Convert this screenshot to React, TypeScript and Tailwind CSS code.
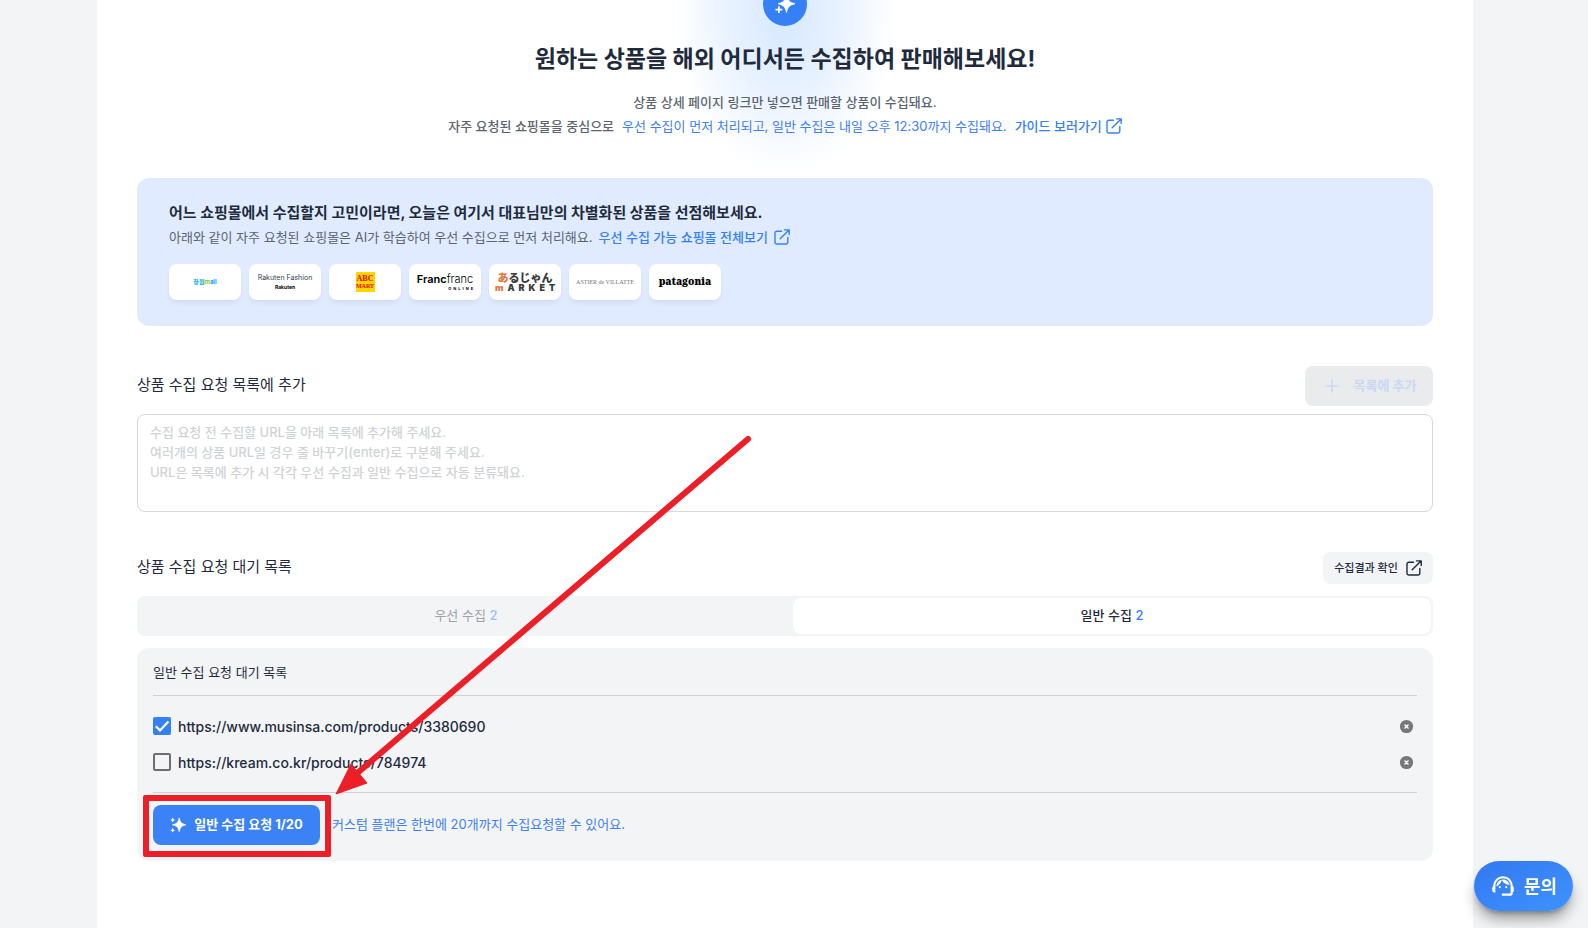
import React from "react";
import { Plus } from "lucide-react";

function OpenIcon({ className }: { className: string }) {
  return (
    <svg viewBox="0 0 16 16" fill="none" stroke="currentColor" strokeWidth="1.4" strokeLinecap="round" strokeLinejoin="round" className={className} aria-hidden="true">
      <path d="M7.5 2.2H2.8A1.8 1.8 0 0 0 1 4v9.2A1.8 1.8 0 0 0 2.8 15H12a1.8 1.8 0 0 0 1.8-1.8V8.5" />
      <path d="M10.5.9H15.2V5.6M15 1.1 6.2 9.8" />
    </svg>
  );
}

function SparkleIcon({ className, mirrored }: { className: string; mirrored?: boolean }) {
  return (
    <svg viewBox="0 0 16 16" fill="currentColor" className={className} aria-hidden="true">
      <path d="M9.200.800C10.300 5.400 11.300 6.500 16 7.800 11.300 9.100 10.300 10.200 9.200 14.800 8.100 10.200 7.100 9.100 2.400 7.800 7.100 6.500 8.100 5.400 9.200.800Z" stroke="currentColor" strokeWidth="0.600" strokeLinejoin="round" />
      {mirrored ? (
        <path d="M2.400 9.800h1.400v2h2v1.400h-2v2H2.400v-2h-2v-1.400h2Z" />
      ) : (
        <>
          <path d="M2.700.6 3.500 2.200 5.100 3 3.500 3.800 2.700 5.400 1.900 3.800.3 3 1.900 2.200Z" />
          <path d="M2.700 10.800 3.500 12.400 5.100 13.200 3.500 14 2.700 15.600 1.900 14 .3 13.200 1.900 12.400Z" />
        </>
      )}
    </svg>
  );
}

function SupportIcon() {
  return (
    <svg viewBox="0 0 24 24" fill="currentColor" className="size-[26px]" aria-hidden="true">
      <path d="M21 12.220C21 6.730 16.740 3 12 3c-4.690 0-9 3.650-9 9.280-.6.340-1 .980-1 1.720v2c0 1.100.9 2 2 2h1v-6.100c0-3.870 3.130-7 7-7s7 3.130 7 7V19h-8v2h8c1.100 0 2-.9 2-2v-1.220c.590-.310 1-.920 1-1.640v-2.300c0-.700-.410-1.310-1-1.620z" />
      <circle cx="9" cy="13" r="1" />
      <circle cx="15" cy="13" r="1" />
      <path d="M18 11.030C17.520 8.180 15.040 6 12.050 6c-3.030 0-6.290 2.510-6.030 6.450 2.470-1.010 4.330-3.210 4.860-5.890 1.310 2.630 4 4.440 7.120 4.470z" />
    </svg>
  );
}

const shops = [
  {
    name: "창원mall",
    logo: (
      <span className="text-[6px] leading-none font-bold text-sky-500">
        창원<span className="text-lime-500">m</span>all
      </span>
    ),
  },
  {
    name: "Rakuten Fashion",
    logo: (
      <span className="flex flex-col items-center gap-1 leading-none text-gray-700">
        <span className="text-[7px] leading-none whitespace-nowrap">Rakuten Fashion</span>
        <span className="text-[5px] leading-none font-bold text-black">Rakuten</span>
      </span>
    ),
  },
  {
    name: "ABC Mart",
    logo: (
      <span className="flex h-5 w-[19px] flex-col items-center justify-center bg-[#ffd500] font-['Liberation_Serif',serif] text-[8px] leading-[9px] font-bold text-red-600">
        <span>ABC</span>
        <span className="text-[6px] leading-[7px]">MART</span>
      </span>
    ),
  },
  {
    name: "Francfranc",
    logo: (
      <span className="flex flex-col items-end gap-0.5 leading-none text-black">
        <span className="text-[11px] leading-none"><span className="font-semibold">Franc</span><span className="font-light">franc</span></span>
        <span className="flex gap-0.5 text-[4px] leading-none font-bold">
          <span>O</span><span>N</span><span>L</span><span>I</span><span>N</span><span>E</span>
        </span>
      </span>
    ),
  },
  {
    name: "あるじゃん MARKET",
    logo: (
      <span className="flex flex-col items-center font-['Noto_Sans_CJK_JP',sans-serif] font-black text-[#3a3a3a]">
        <span className="text-[11px] leading-[12px] whitespace-nowrap"><span className="text-[#e8743b]">あ</span>るじゃん</span>
        <span className="flex gap-1 font-['Inter',sans-serif] text-[9px] leading-[10px]">
          <span className="text-[#e8743b]">m</span><span>A</span><span>R</span><span>K</span><span>E</span><span>T</span>
        </span>
      </span>
    ),
  },
  {
    name: "Astier de Villatte",
    logo: <span className="font-['Liberation_Serif',serif] text-[6px] leading-none whitespace-nowrap text-neutral-500">ASTIER de VILLATTE</span>,
  },
  {
    name: "Patagonia",
    logo: <span className="pb-0.5 font-['Noto_Serif','DejaVu_Serif',serif] text-[10px] leading-none font-black text-black">patagonia</span>,
  },
];

const requests = [
  { url: "https://www.musinsa.com/products/3380690", checked: true },
  { url: "https://kream.co.kr/products/784974", checked: false },
];

function RequestRow({ url, checked }: { url: string; checked: boolean }) {
  return (
    <li className="flex h-9 items-center justify-between pr-[3px]">
      <label className="flex items-center gap-[7px] text-[14px] font-medium">
        <span className="grid size-[18px]">
          <input
            type="checkbox"
            defaultChecked={checked}
            className="peer col-start-1 row-start-1 size-[18px] appearance-none rounded-xs border-2 border-[#6d7073] checked:border-[#3580f2] checked:bg-[#3580f2]"
          />
          <svg viewBox="0 0 18 18" fill="none" stroke="white" strokeWidth="2.200" className="pointer-events-none invisible col-start-1 row-start-1 size-[18px] peer-checked:visible" aria-hidden="true">
            <path d="m2.800 9.200 4.200 4.200 8.400-8.800" />
          </svg>
        </span>
        {url}
      </label>
      <button type="button" aria-label={`${url} 삭제`}>
        <svg viewBox="0 0 15 15" className="size-[15px]" aria-hidden="true">
          <circle cx="7.500" cy="7.500" r="6.600" fill="#757877" />
          <path d="m5.500 5.500 4 4m0-4-4 4" stroke="white" strokeWidth="1.400" />
        </svg>
      </button>
    </li>
  );
}

function Pointer() {
  return (
    <>
      <div className="pointer-events-none absolute -top-2.5 -left-2.5 h-[62px] w-[188px] rounded-xs border-6 border-[#ec1f29]" />
      <svg viewBox="0 0 420 362" className="pointer-events-none absolute bottom-[50px] left-[180px] h-[362px] w-[420px] max-w-none" aria-hidden="true">
        <path d="M415 6 22 342" stroke="#ec1f29" strokeWidth="6" strokeLinecap="round" />
        <path d="M3 361 18 331 34 350Z" fill="#ec1f29" stroke="#ec1f29" />
      </svg>
    </>
  );
}

export default function App() {
  return (
    <div className="min-h-screen overflow-hidden bg-[#f2f4f6] pr-[115px] pl-[97px] font-['Inter','Noto_Sans_CJK_KR',sans-serif] text-[#1f2b3d]">
      <main className="min-h-screen bg-white px-10 pb-16">
        <header className="relative flex flex-col items-center">
          <div className="absolute top-0 left-1/2 h-44 w-56 -translate-x-1/2 bg-[radial-gradient(ellipse_at_50%_8%,#d6e8ff_0%,#e8f2ff_35%,#f8fbff_58%,#ffffff_70%)]" />
          <div className="relative -mt-[18px] flex size-11 items-center justify-center rounded-full bg-[#3580f6] text-white">
            <SparkleIcon className="size-5" mirrored />
          </div>
          <h1 className="relative mt-[17px] text-[23px] leading-8 font-bold">원하는 상품을 해외 어디서든 수집하여 판매해보세요!</h1>
          <p className="relative mt-[15px] text-[13px] leading-6 font-medium text-[#5b6470]">상품 상세 페이지 링크만 넣으면 판매할 상품이 수집돼요.</p>
          <p className="relative flex items-center gap-2 text-[13px] leading-6 font-medium text-[#5b6470]">
            자주 요청된 쇼핑몰을 중심으로
            <span className="font-normal text-[#4080f0]">우선 수집이 먼저 처리되고, 일반 수집은 내일 오후 12:30까지 수집돼요.</span>
            <a href="#guide" className="flex items-center gap-1 text-[#3580f6]">
              가이드 보러가기 <OpenIcon className="size-4" />
            </a>
          </p>
        </header>

        <section className="mt-10 rounded-xl bg-[#e0ebff] px-8 pt-[22px] pb-[26px]">
          <h2 className="text-[15px] leading-[26px] font-bold">어느 쇼핑몰에서 수집할지 고민이라면, 오늘은 여기서 대표님만의 차별화된 상품을 선점해보세요.</h2>
          <p className="flex items-center gap-1.5 text-[13px] leading-[22px] text-[#5b6470]">
            아래와 같이 자주 요청된 쇼핑몰은 AI가 학습하여 우선 수집으로 먼저 처리해요.
            <a href="#malls" className="flex items-center gap-1.5 font-medium text-[#3580f6]">
              우선 수집 가능 쇼핑몰 전체보기 <OpenIcon className="size-4" />
            </a>
          </p>
          <ul className="mt-4 flex gap-2">
            {shops.map((shop) => (
              <li key={shop.name} className="flex h-9 w-[72px] items-center justify-center overflow-hidden rounded-lg bg-white shadow-md shadow-black/5">
                {shop.logo}
              </li>
            ))}
          </ul>
        </section>

        <section className="mt-10">
          <div className="flex h-10 items-center justify-between">
            <label htmlFor="urls" className="pb-0.5 text-[15px]">상품 수집 요청 목록에 추가</label>
            <button type="button" disabled className="flex h-10 w-32 items-center justify-center gap-3 rounded-lg bg-[#e9ebec] text-[13px] font-bold text-[#c9d8f6]">
              <Plus className="size-5" strokeWidth={2} /> 목록에 추가
            </button>
          </div>
          <textarea
            id="urls"
            className="mt-2 block h-[98px] w-full resize-none rounded-lg border border-[#d5d8db] bg-white px-3 py-[7px] text-[13px] leading-5 placeholder:font-medium placeholder:text-[#d0d3d5]"
            placeholder={"수집 요청 전 수집할 URL을 아래 목록에 추가해 주세요.\n여러개의 상품 URL일 경우 줄 바꾸기(enter)로 구분해 주세요.\nURL은 목록에 추가 시 각각 우선 수집과 일반 수집으로 자동 분류돼요."}
          />
        </section>

        <section className="mt-10">
          <div className="flex h-8 items-center justify-between">
            <h2 className="pb-0.5 text-[15px]">상품 수집 요청 대기 목록</h2>
            <button type="button" className="flex h-8 w-[110px] items-center justify-center gap-2 rounded-lg bg-[#f2f4f6] text-[11px] font-medium">
              수집결과 확인 <OpenIcon className="size-4" />
            </button>
          </div>
          <div role="tablist" className="mt-3 flex h-10 rounded-lg bg-[#f2f4f6] p-0.5 text-[13px]">
            <button type="button" role="tab" aria-selected="false" className="flex-1 px-2 text-[#9da2a8]">
              우선 수집 <span className="font-medium text-[#a3bffa]">2</span>
            </button>
            <button type="button" role="tab" aria-selected="true" className="flex-1 rounded-lg bg-white font-medium">
              일반 수집 <span className="text-[#3580f6]">2</span>
            </button>
          </div>

          <div className="mt-3 rounded-xl bg-[#f2f4f6] p-4">
            <h3 className="pb-[15px] text-[13px] leading-4">일반 수집 요청 대기 목록</h3>
            <ul className="border-y border-[#cdd1d5] py-3">
              {requests.map((request) => (
                <RequestRow key={request.url} {...request} />
              ))}
            </ul>
            <div className="mt-3 flex items-center gap-3">
              <div className="relative">
                <button type="button" className="flex h-10 w-[167px] items-center justify-center gap-2 rounded-lg bg-[#3b82f6] text-[13px] font-bold text-white">
                  <SparkleIcon className="size-4" /> 일반 수집 요청 1/20
                </button>
                <Pointer />
              </div>
              <p className="text-[13px] text-[#4080f0]">커스텀 플랜은 한번에 20개까지 수집요청할 수 있어요.</p>
            </div>
          </div>
        </section>
      </main>

      <button type="button" className="fixed right-[15px] bottom-[17px] flex h-[50px] w-[99px] items-center justify-center gap-2 rounded-full bg-linear-to-br from-[#3478f0] to-[#3d93ff] text-[18px] font-bold text-white shadow-lg shadow-black/40">
        <SupportIcon /> 문의
      </button>
    </div>
  );
}
